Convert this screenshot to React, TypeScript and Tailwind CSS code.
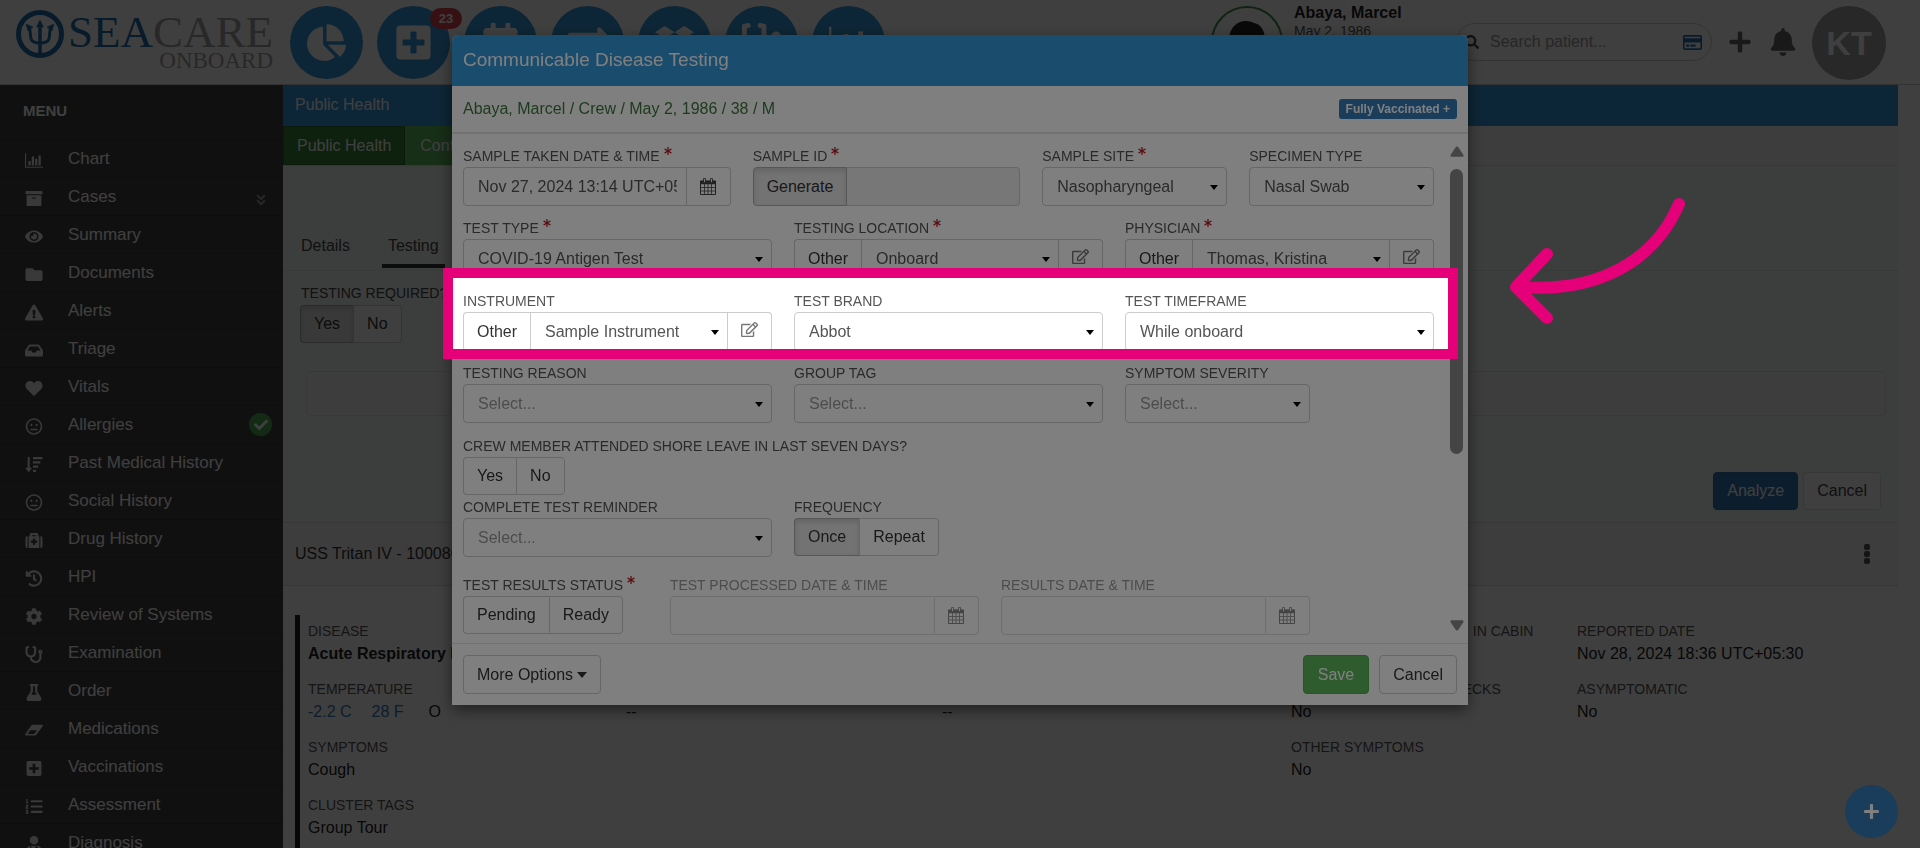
import { useState } from 'react';
import type { ComponentType, ReactNode } from 'react';
import {
    FaAngleDoubleDown,
    FaArchive,
    FaAsterisk,
    FaBell,
    FaCalendarAlt,
    FaChartPie,
    FaCheck,
    FaCog,
    FaDropbox,
    FaExchangeAlt,
    FaExclamationTriangle,
    FaEye,
    FaFlask,
    FaFolder,
    FaHeart,
    FaHistory,
    FaInbox,
    FaListOl,
    FaMedkit,
    FaPlus,
    FaPlusSquare,
    FaRegCreditCard,
    FaRegEdit,
    FaRegMeh,
    FaSearch,
    FaSortAmountDown,
    FaStethoscope,
    FaUserMd,
} from 'react-icons/fa';

type Icon = ComponentType<{ className?: string }>;

interface MenuItem {
    label: string;
    icon: Icon;
    expandable?: boolean;
    done?: boolean;
}

function BarChartIcon({ className }: { className?: string }) {
    return (
        <svg viewBox="0 0 2048 1664" className={className} fill="currentColor">
            <path d="M640 896v512H384V896h256zm384-512v1024H768V384h256zm1024 1152v128H0V0h128v1536h1920zM1408 640v768h-256V640h256zm384-384v1152h-256V256h256z" />
        </svg>
    );
}

function EraserIcon({ className }: { className?: string }) {
    return (
        <svg viewBox="0 0 19 17" className={className} fill="currentColor" fillRule="evenodd">
            <path d="M8 2.500h10c.9 0 1.200.7.700 1.400l-6.700 9c-.4.600-1 .9-1.700.9H.9c-.9 0-1.200-.7-.7-1.400l6.200-9c.4-.600 1-.900 1.600-.900zM5.500 8.200L2.700 12.200h7l2.900-4z" />
        </svg>
    );
}

const menuItems: MenuItem[] = [
    { label: 'Chart', icon: BarChartIcon },
    { label: 'Cases', icon: FaArchive, expandable: true },
    { label: 'Summary', icon: FaEye },
    { label: 'Documents', icon: FaFolder },
    { label: 'Alerts', icon: FaExclamationTriangle },
    { label: 'Triage', icon: FaInbox },
    { label: 'Vitals', icon: FaHeart },
    { label: 'Allergies', icon: FaRegMeh, done: true },
    { label: 'Past Medical History', icon: FaSortAmountDown },
    { label: 'Social History', icon: FaRegMeh },
    { label: 'Drug History', icon: FaMedkit },
    { label: 'HPI', icon: FaHistory },
    { label: 'Review of Systems', icon: FaCog },
    { label: 'Examination', icon: FaStethoscope },
    { label: 'Order', icon: FaFlask },
    { label: 'Medications', icon: EraserIcon },
    { label: 'Vaccinations', icon: FaPlusSquare },
    { label: 'Assessment', icon: FaListOl },
    { label: 'Diagnosis', icon: FaUserMd },
];

const shortcuts: { label: string; icon: Icon; count?: number }[] = [
    { label: 'Dashboard', icon: FaChartPie },
    { label: 'Cases', icon: FaPlusSquare, count: 23 },
    { label: 'Calendar', icon: FaCalendarAlt },
    { label: 'Transfers', icon: FaExchangeAlt },
    { label: 'Inventory', icon: FaDropbox },
    { label: 'Clinic', icon: FaStethoscope },
    { label: 'Reports', icon: BarChartIcon },
];

function Logo() {
    return (
        <a href="#home" className="flex items-start gap-1 w-[258px] shrink-0">
            <svg viewBox="0 0 48 48" className="w-12 h-12 mt-1 shrink-0 text-[#1f6ea8]" fill="none" stroke="currentColor">
                <circle cx="24" cy="24" r="21.5" strokeWidth="5" />
                <path d="M24 14v30" strokeWidth="3.5" />
                <path d="M12 16c3 3 2 9 3 13 1 3 4 4 9 4s8-1 9-4c1-4 0-10 3-13" strokeWidth="3" />
                <path d="M24 10l-3.5 7h7zM10 14l7 3-5 4zM38 14l-7 3 5 4z" fill="currentColor" strokeWidth="0.5" />
            </svg>
            <span className="flex flex-col items-end pt-[7px] font-['Liberation_Serif','Times_New_Roman',serif] text-[#a3a3a3]">
                <span className="text-[45px] leading-[38px]">
                    <span className="text-[#1f6ea8]">SEA</span>CARE
                </span>
                <span className="text-[23px] leading-[20px]">ONBOARD</span>
            </span>
        </a>
    );
}

function TopBar() {
    return (
        <header className="h-[85px] shrink-0 flex items-start justify-between bg-white border-b border-[#ccc] pl-4 pr-[34px] pt-[6px]">
            <div className="flex items-start">
                <Logo />
                <nav className="flex gap-[14px] ml-4">
                    {shortcuts.map(({ label, icon: Icon, count }) => (
                        <button
                            key={label}
                            aria-label={label}
                            className="relative w-[73px] h-[73px] rounded-full bg-[#3598dc] text-white flex items-center justify-center"
                        >
                            <Icon className="w-[39px] h-[39px]" />
                            {count && (
                                <span className="absolute top-[2px] -right-[12px] w-8 h-[21px] rounded-full bg-[#d9434f] text-[13px] leading-[21px] font-bold text-white z-10">
                                    {count}
                                </span>
                            )}
                        </button>
                    ))}
                </nav>
            </div>
            <div className="flex items-start">
                <div className="flex w-[245px] gap-[11px]">
                    <svg viewBox="0 0 72 72" className="w-[72px] h-[72px]">
                        <circle cx="36" cy="36" r="35" fill="#fff" stroke="#3f9142" strokeWidth="2" />
                        <path d="M18 34c0-12 8-19 17-19 4 0 6 1 8 2 7 1 11 8 11 17l-4 14H22z" fill="#222" />
                    </svg>
                    <div className="leading-[19px] -mt-[3px]">
                        <p className="text-[16px] font-bold text-[#222]">Abaya, Marcel</p>
                        <p className="text-[14px] text-[#555]">May 2, 1986</p>
                    </div>
                </div>
                <label className="mt-[17px] w-[256px] h-[38px] rounded-full border border-[#ccc] flex items-center pl-2 pr-[9px] gap-[11px]">
                    <FaSearch className="w-[14px] h-[14px] text-[#444] shrink-0" aria-hidden />
                    <input
                        type="search"
                        aria-label="Search patient"
                        placeholder="Search patient..."
                        className="flex-1 min-w-0 bg-transparent text-[16px] placeholder:text-[#999] outline-none"
                    />
                    <FaRegCreditCard className="w-[19px] h-[19px] text-[#2f6fa8] shrink-0" aria-hidden />
                </label>
                <button aria-label="Add" className="ml-[16px] mt-[24px]">
                    <FaPlus className="w-[24px] h-[24px] text-[#666]" />
                </button>
                <button aria-label="Notifications" className="ml-[17px] mt-[22px]">
                    <FaBell className="w-[28px] h-[28px] text-[#666]" />
                </button>
                <span className="ml-[15px] w-[74px] h-[74px] rounded-full bg-[#a0a0a0] text-white text-[34px] font-bold flex items-center justify-center">
                    KT
                </span>
            </div>
        </header>
    );
}

function Sidebar() {
    return (
        <aside className="w-[283px] shrink-0 bg-[#424242] text-white overflow-hidden">
            <h2 className="h-[54px] pl-[23px] text-[15px] leading-[51px] font-bold">MENU</h2>
            <ul>
                {menuItems.map(({ label, icon: Icon, expandable, done }) => (
                    <li key={label} className="border-t border-[#343434]">
                        <a href="#menu" className="h-[37px] flex items-center pl-[25px] pr-[11px]">
                            <Icon className="w-[18px] h-[17px] mt-[3px] text-[#e4e4e4]" />
                            <span className="ml-[25px] flex-1 text-[17px]">{label}</span>
                            {expandable && <FaAngleDoubleDown className="w-[14px] h-[14px] mr-1 mt-[6px] text-[#999]" />}
                            {done && (
                                <span className="w-[23px] h-[23px] rounded-full bg-[#4caf50] flex items-center justify-center">
                                    <FaCheck className="w-[14px] h-[14px]" />
                                </span>
                            )}
                        </a>
                    </li>
                ))}
            </ul>
        </aside>
    );
}

interface RecordItemProps {
    label: string;
    children?: ReactNode;
}

function RecordItem({ label, children }: RecordItemProps) {
    return (
        <div className="h-[58px] whitespace-nowrap">
            <dt className="text-[14px] leading-[20px] text-[#555]">{label}</dt>
            <dd className="text-[16px] leading-[25px] text-[#222]">{children}</dd>
        </div>
    );
}

function CaseRecord() {
    return (
        <dl className="ml-3 mt-[29px] border-l-[5px] border-[#222] pl-2 pt-[6px] h-[300px] grid grid-cols-[318px_316px_349px_286px_1fr]">
            <div>
                <RecordItem label="DISEASE">
                    <b>Acute Respiratory Disease</b>
                </RecordItem>
                <RecordItem label="TEMPERATURE">
                    <span className="flex gap-5">
                        <a href="#celsius" className="text-[#337ab7]">-2.2 C</a>
                        <a href="#fahrenheit" className="text-[#337ab7]">28 F</a>
                        <span className="ml-[5px]">O</span>
                    </span>
                </RecordItem>
                <RecordItem label="SYMPTOMS">Cough</RecordItem>
                <RecordItem label="CLUSTER TAGS">Group Tour</RecordItem>
            </div>
            <div>
                <RecordItem label="ONSET">--</RecordItem>
                <RecordItem label="MEDICATION">--</RecordItem>
            </div>
            <div>
                <RecordItem label="EXPOSURE">--</RecordItem>
                <RecordItem label="ADMITTED">--</RecordItem>
            </div>
            <div>
                <RecordItem label="ISOLATED/QUARANTINED. IN CABIN">No</RecordItem>
                <RecordItem label="DAILY TEMPERATURE CHECKS">No</RecordItem>
                <RecordItem label="OTHER SYMPTOMS">No</RecordItem>
            </div>
            <div>
                <RecordItem label="REPORTED DATE">Nov 28, 2024 18:36 UTC+05:30</RecordItem>
                <RecordItem label="ASYMPTOMATIC">No</RecordItem>
            </div>
        </dl>
    );
}

function PublicHealth() {
    return (
        <main className="flex-1 min-w-0 mr-[22px] text-[16px]">
            <h1 className="h-[41px] pl-3 leading-[39px] bg-[#3598dc] text-white">Public Health</h1>
            <nav className="h-[40px] flex bg-[#f5f5f5] border-b border-[#ddd] text-white leading-[39px]">
                <a href="#public-health" className="px-[13px] bg-[#398439] border border-[#2d6a2d] leading-[37px]">Public Health</a>
                <a href="#contact-tracing" className="px-[15px] bg-[#5cb85c]">Contact Tracing</a>
            </nav>
            <section className="bg-[#f2f8f5] pt-[58px] pb-3">
                <div className="flex border-b border-[#e2e8e5] pl-[11px] text-[#444]">
                    <a href="#details" className="px-[7px] mr-[25px] leading-[43px] h-[46px]">Details</a>
                    <a href="#testing" className="px-[6px] leading-[43px] h-[44px] border-b-4 border-[#333]">Testing</a>
                </div>
                <p className="pl-[18px] pt-3 text-[14px] leading-[21px] text-[#444]">TESTING REQUIRED?</p>
                <div className="pl-[17px] mt-px">
                    <YesNo value="Yes" />
                </div>
                <div className="ml-[23px] mr-[12px] mt-[28px] h-[45px] rounded border border-[#e3e3e3] bg-[#f5f5f5]" />
                <div className="flex justify-end gap-[5px] pr-[17px] mt-[56px]">
                    <button className="h-[38px] px-[13px] rounded bg-[#337ab7] border border-[#2e6da4] text-white">Analyze</button>
                    <button className="h-[38px] px-[13px] rounded bg-white border border-[#ddd] text-[#444]">Cancel</button>
                </div>
            </section>
            <div className="h-[64px] bg-[#f5f5f5] border-y border-[#ddd] flex items-center justify-between pl-3 pr-[28px] text-[#333]">
                <span>USS Tritan IV - 1000804</span>
                <button aria-label="Case options" className="flex flex-col gap-px">
                    <i className="w-[6px] h-[6px] rounded-[2px] bg-[#555]" />
                    <i className="w-[6px] h-[6px] rounded-[2px] bg-[#555]" />
                    <i className="w-[6px] h-[6px] rounded-[2px] bg-[#555]" />
                </button>
            </div>
            <CaseRecord />
        </main>
    );
}

interface ToggleGroupProps {
    options: string[];
    value?: string;
}

function ToggleGroup({ options, value }: ToggleGroupProps) {
    const [selected, setSelected] = useState(value);
    return (
        <div className="flex">
            {options.map((option) => (
                <button
                    key={option}
                    type="button"
                    aria-pressed={selected === option}
                    onClick={() => setSelected(option)}
                    className={`h-[38px] px-[13px] border border-r-0 last:border-r text-[16px] text-[#333] first:rounded-l last:rounded-r ${selected === option ? 'bg-[#e6e6e6] border-[#adadad] shadow-[inset_0_3px_5px_rgba(0,0,0,0.125)]' : 'bg-white border-[#ccc]'}`}
                >
                    {option}
                </button>
            ))}
        </div>
    );
}

function YesNo({ value }: { value?: string }) {
    return <ToggleGroup options={['Yes', 'No']} value={value} />;
}

interface FieldProps {
    id: string;
    label: string;
    span: string;
    required?: boolean;
    muted?: boolean;
    children: ReactNode;
}

function Field({ id, label, span, required, muted, children }: FieldProps) {
    return (
        <div className={`px-[11px] ${span}`}>
            <label htmlFor={id} className={`flex h-[21px] text-[14px] leading-[21px] whitespace-nowrap ${muted ? 'text-[#999]' : 'text-[#555]'}`}>
                {label}
                {required && <FaAsterisk className="w-2 h-2 ml-1 mt-px text-[#b71c1c]" />}
            </label>
            {children}
        </div>
    );
}

interface SelectBoxProps {
    id: string;
    value?: string;
    withOther?: boolean;
}

function SelectBox({ id, value, withOther }: SelectBoxProps) {
    return (
        <div className="flex h-[39px]">
            {withOther && <button type="button" className="px-[13px] border border-r-0 border-[#ccc] rounded-l text-[#333]">Other</button>}
            <div className="relative flex-1 min-w-0">
                <select
                    id={id}
                    className={`appearance-none w-full h-full border border-[#ccc] bg-white pl-[14px] pr-7 outline-none ${withOther ? '' : 'rounded'} ${value ? 'text-[#555]' : 'text-[#999]'}`}
                >
                    <option>{value ?? 'Select...'}</option>
                </select>
                <span className="absolute right-[9px] top-[18px] border-x-4 border-t-[5px] border-x-transparent border-t-black pointer-events-none" />
            </div>
            {withOther && (
                <button type="button" aria-label="Edit" className="w-[44px] border border-l-0 border-[#ccc] rounded-r flex items-center justify-center text-[#777]">
                    <FaRegEdit className="w-[17px] h-[17px] -mt-1" />
                </button>
            )}
        </div>
    );
}

function CalendarIcon() {
    return (
        <svg viewBox="0 0 16 17" className="w-4 h-[17px]" fill="none" stroke="currentColor">
            <path d="M0.5 3h15v13.5h-15z" />
            <path d="M0.5 4.5h15" strokeWidth="3.5" />
            <path d="M4.5 6v10M8 6v10M11.5 6v10M1 9.5h14M1 13h14" strokeWidth="0.8" />
            <path d="M4.5 1v3M11.5 1v3" strokeWidth="2.6" strokeLinecap="round" />
            <path d="M4.5 1.2v2.6M11.5 1.2v2.6" stroke="#fff" strokeWidth="1" strokeLinecap="round" />
        </svg>
    );
}

function DateBox({ id, value, muted }: { id: string; value?: string; muted?: boolean }) {
    return (
        <div className="flex h-[39px]">
            <input
                id={id}
                type="text"
                defaultValue={value}
                disabled={muted}
                className={`flex-1 min-w-0 pl-[14px] pr-[9px] border rounded-l text-[#555] outline-none ${muted ? 'border-[#ddd]' : 'border-[#ccc]'}`}
            />
            <button
                type="button"
                aria-label="Pick date"
                disabled={muted}
                className={`w-[44px] border border-l-0 rounded-r flex items-center justify-center ${muted ? 'border-[#ddd] text-[#888]' : 'border-[#ccc] text-[#444]'}`}
            >
                <CalendarIcon />
            </button>
        </div>
    );
}

function Row({ gap, children }: { gap: string; children: ReactNode }) {
    return <div className={`grid grid-cols-[repeat(24,minmax(0,1fr))] ${gap}`}>{children}</div>;
}

function TestingForm() {
    return (
        <form className="flex-1 min-w-0 pt-3 pb-2" onSubmit={(e) => e.preventDefault()}>
            <Row gap="mb-3">
                <Field id="taken" label="SAMPLE TAKEN DATE & TIME" span="col-span-7" required>
                    <DateBox id="taken" value="Nov 27, 2024 13:14 UTC+05:30" />
                </Field>
                <Field id="sample-id" label="SAMPLE ID" span="col-span-7" required>
                    <div className="flex h-[39px]">
                        <button type="button" className="px-[13px] border border-[#adadad] rounded-l bg-[#e6e6e6] text-[#333] shadow-[inset_0_3px_5px_rgba(0,0,0,0.125)]">
                            Generate
                        </button>
                        <input id="sample-id" type="text" readOnly className="flex-1 min-w-0 border border-l-0 border-[#ccc] rounded-r bg-[#eee]" />
                    </div>
                </Field>
                <Field id="site" label="SAMPLE SITE" span="col-span-5" required>
                    <SelectBox id="site" value="Nasopharyngeal" />
                </Field>
                <Field id="specimen" label="SPECIMEN TYPE" span="col-span-5">
                    <SelectBox id="specimen" value="Nasal Swab" />
                </Field>
            </Row>
            <Row gap="mb-[13px]">
                <Field id="test-type" label="TEST TYPE" span="col-span-8" required>
                    <SelectBox id="test-type" value="COVID-19 Antigen Test" />
                </Field>
                <Field id="location" label="TESTING LOCATION" span="col-span-8" required>
                    <SelectBox id="location" value="Onboard" withOther />
                </Field>
                <Field id="physician" label="PHYSICIAN" span="col-span-8" required>
                    <SelectBox id="physician" value="Thomas, Kristina" withOther />
                </Field>
            </Row>
            <Row gap="mb-3">
                <Field id="instrument" label="INSTRUMENT" span="col-span-8">
                    <SelectBox id="instrument" value="Sample Instrument" withOther />
                </Field>
                <Field id="brand" label="TEST BRAND" span="col-span-8">
                    <SelectBox id="brand" value="Abbot" />
                </Field>
                <Field id="timeframe" label="TEST TIMEFRAME" span="col-span-8">
                    <SelectBox id="timeframe" value="While onboard" />
                </Field>
            </Row>
            <Row gap="mb-[13px]">
                <Field id="reason" label="TESTING REASON" span="col-span-8">
                    <SelectBox id="reason" />
                </Field>
                <Field id="group-tag" label="GROUP TAG" span="col-span-8">
                    <SelectBox id="group-tag" />
                </Field>
                <Field id="severity" label="SYMPTOM SEVERITY" span="col-span-5">
                    <SelectBox id="severity" />
                </Field>
            </Row>
            <Row gap="mb-0.5">
                <Field id="shore-leave" label="CREW MEMBER ATTENDED SHORE LEAVE IN LAST SEVEN DAYS?" span="col-span-24">
                    <YesNo />
                </Field>
            </Row>
            <Row gap="mb-[18px]">
                <Field id="reminder" label="COMPLETE TEST REMINDER" span="col-span-8">
                    <SelectBox id="reminder" />
                </Field>
                <Field id="frequency" label="FREQUENCY" span="col-span-8">
                    <ToggleGroup options={['Once', 'Repeat']} value="Once" />
                </Field>
            </Row>
            <Row gap="mb-0">
                <Field id="status" label="TEST RESULTS STATUS" span="col-span-5" required>
                    <ToggleGroup options={['Pending', 'Ready']} />
                </Field>
                <Field id="processed" label="TEST PROCESSED DATE & TIME" span="col-span-8" muted>
                    <DateBox id="processed" muted />
                </Field>
                <Field id="results" label="RESULTS DATE & TIME" span="col-span-8" muted>
                    <DateBox id="results" muted />
                </Field>
            </Row>
        </form>
    );
}

function Scrollbar() {
    return (
        <div className="w-[23px] flex flex-col items-center pt-3 pb-3">
            <svg viewBox="0 0 14 11" className="w-[14px] h-[11px] text-[#888]" fill="currentColor">
                <path d="M7 0.5c.6 0 1 .3 1.3.8l5 7.5c.7 1 .2 2-1 2H1.700c-1.200 0-1.700-1-1-2l5-7.500C6 .8 6.400.5 7 .5z" />
            </svg>
            <div className="flex-1 w-[13px] py-3">
                <div className="h-[65%] rounded-full bg-[#888]" />
            </div>
            <svg viewBox="0 0 14 11" className="w-[14px] h-[11px] text-[#888] rotate-180" fill="currentColor">
                <path d="M7 0.5c.6 0 1 .3 1.3.8l5 7.5c.7 1 .2 2-1 2H1.700c-1.200 0-1.700-1-1-2l5-7.500C6 .8 6.400.5 7 .5z" />
            </svg>
        </div>
    );
}

function TestingDialog() {
    return (
        <div role="dialog" aria-label="Communicable Disease Testing" className="relative mx-auto mt-[35px] w-full max-w-[1016px] text-[16px]">
            <div className="bg-white rounded-t-md shadow-[0_5px_15px_rgba(0,0,0,0.5)]">
                <h2 className="h-[51px] pl-[11px] rounded-t-md bg-[#3598dc] text-white text-[19px] leading-[50px]">Communicable Disease Testing</h2>
                <div className="h-[48px] px-[11px] flex items-center justify-between border-b-2 border-[#e5e5e5]">
                    <p className="text-[#3c763d]">Abaya, Marcel / Crew / May 2, 1986 / 38 / M</p>
                    <button className="h-5 px-[7px] rounded-[3px] bg-[#337ab7] text-white text-[12px] font-bold whitespace-nowrap">Fully Vaccinated +</button>
                </div>
                <div className="flex">
                    <TestingForm />
                    <Scrollbar />
                </div>
                <div className="h-[62px] px-[11px] pt-[11px] flex items-start justify-between border-t border-[#e5e5e5]">
                    <button className="h-[39px] px-[13px] rounded border border-[#ccc] text-[#333] flex items-center gap-1">
                        More Options
                        <span className="border-x-[5px] border-t-[6px] border-x-transparent border-t-[#333]" />
                    </button>
                    <div className="flex gap-[10px]">
                        <button className="h-[39px] px-[14px] rounded bg-[#5cb85c] border border-[#4cae4c] text-white">Save</button>
                        <button className="h-[39px] px-[13px] rounded border border-[#ccc] text-[#333]">Cancel</button>
                    </div>
                </div>
            </div>
            {/* Tutorial spotlight: the spread shadow dims everything outside the frame */}
            <div className="absolute -left-[9px] right-[10px] top-[233px] h-[91px] border-[10px] border-[#e5007a] shadow-[0_0_0_4000px_rgba(0,0,0,0.5)] pointer-events-none" />
            <svg viewBox="0 0 180 134" className="absolute left-[1055px] top-[159px] w-[180px] h-[134px] text-[#e5007a]" fill="none" stroke="currentColor" strokeLinecap="round" strokeLinejoin="round">
                <path d="M172 10C148 66 92 99 14 93" strokeWidth="12" />
                <path d="M40 60L9 93l31 31" strokeWidth="12" />
            </svg>
        </div>
    );
}

export default function App() {
    return (
        <div className="h-screen overflow-hidden flex flex-col bg-white font-['Liberation_Sans',Arial,sans-serif]">
            <TopBar />
            <div className="flex-1 min-h-0 flex">
                <Sidebar />
                <PublicHealth />
            </div>
            <div className="fixed inset-0 z-20 overflow-hidden bg-black/50">
                <button aria-label="Add record" className="absolute right-[22px] bottom-[10px] w-[53px] h-[53px] rounded-full bg-[#337ab7] text-white flex items-center justify-center">
                    <FaPlus className="w-[17px] h-[17px]" />
                </button>
                <TestingDialog />
            </div>
        </div>
    );
}
